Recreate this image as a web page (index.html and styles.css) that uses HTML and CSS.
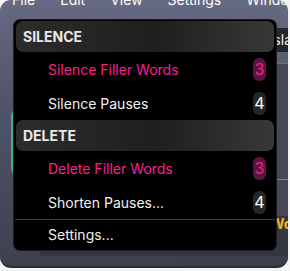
FILE: index.html
```html
<!DOCTYPE html>
<html>
<head>
    <meta charset="utf-8" />
    <link rel="stylesheet" href="styles.css">
</head>
<body>
    <div class="window">
        <nav class="menubar">
            <span>File</span>
            <span>Edit</span>
            <span>View</span>
            <span>Settings</span>
            <span>Window</span>
        </nav>

        <div class="workspace">
            <div class="left-pane">
                <div class="teal-card"></div>
            </div>
            <div class="right-pane">
                <div class="tab-strip"><span>Transcript Isla</span></div>
                <div class="ruler"></div>
                <div class="lower">
                    <div class="mark"></div>
                    <div class="caption">Wow</div>
                </div>
                <div class="foot"></div>
            </div>
        </div>

        <!-- dropdown over the app -->
        <section class="menu">
            <div class="menu-head">SILENCE</div>
            <div class="menu-item pink">
                <span>Silence Filler Words</span>
                <span class="badge">3</span>
            </div>
            <div class="menu-item">
                <span>Silence Pauses</span>
                <span class="badge">4</span>
            </div>

            <div class="menu-head">DELETE</div>
            <div class="menu-item pink">
                <span>Delete Filler Words</span>
                <span class="badge">3</span>
            </div>
            <div class="menu-item">
                <span>Shorten Pauses...</span>
                <span class="badge">4</span>
            </div>

            <div class="sep"></div>

            <div class="menu-item last">
                <span>Settings...</span>
            </div>
        </section>
    </div>
</body>
</html>
```

FILE: styles.css
```css
* {
    padding: 0;
    margin: 0;
    box-sizing: border-box;
}

body {
    width: 290px;
    height: 271px;
    background-color: #f4f4f6;
    overflow: hidden;
    font-family: Inter, 'Noto Sans', sans-serif;
    font-size: 14px;
    color: #f2f2f2;
}

.window {
    position: relative;
    display: flex;
    flex-direction: column;
    width: 288px;
    height: 268px;
    border-radius: 11px;
    background: linear-gradient(#666a82, #50546a 40%, #3d404d);
    border-bottom: 2px solid #2a2c35;
    overflow: hidden;
}

.menubar {
    display: flex;
    gap: 25px;
    height: 6px;
    padding-left: 12px;
    line-height: 0;
    color: #fff;
    white-space: nowrap;
}

.workspace {
    flex: 1;
    display: flex;
    padding-top: 22px;
}

.left-pane {
    width: 40px;
    padding-top: 77px;
}

.teal-card {
    height: 74px;
    margin-left: 11px;
    border-left: 2px solid #3fae94;
    border-radius: 12px 0 0 12px;
}

.right-pane {
    flex: 1;
    display: flex;
    flex-direction: column;
    align-items: stretch;
}

.tab-strip {
    height: 24px;
    background-color: #24252d;
    text-align: right;
    line-height: 24px;
    white-space: nowrap;
    overflow: hidden;
    margin-right: -4px;
}

.ruler {
    height: 12px;
    background-color: #5b5f72;
    border-bottom: 1px solid #6c7084;
}

.lower {
    flex: 1;
    display: flex;
    flex-direction: column;
    justify-content: flex-end;
    background-color: #454857;
}

.mark {
    height: 1px;
    margin-bottom: 36px;
    background-color: #7c8092;
}

.caption {
    height: 40px;
    background-color: #33353f;
    color: #f1b52a;
    font-weight: 700;
    text-align: right;
    line-height: 12px;
    padding-top: 2px;
    margin-right: -16px;
}

.foot {
    height: 10px;
    margin-left: 135px;
    background-color: #3b3e4b;
    border-radius: 0 0 0 10px;
}

.menu {
    position: absolute;
    left: 13px;
    top: 19px;
    width: 264px;
    padding: 1px 2px 2px;
    background-color: #000;
    border: 1px solid #1c1c1e;
    border-radius: 7px;
}

.menu-head {
    height: 31px;
    padding-left: 7px;
    line-height: 31px;
    font-weight: 700;
    color: #e8e8e8;
    border-radius: 7px;
    background: linear-gradient(90deg, #2c2c2c, #1f1f1f 55%, #383838);
}

.menu-item {
    display: flex;
    justify-content: space-between;
    align-items: center;
    height: 34px;
    padding: 0 8px 0 32px;
    color: #f0f0f0;
}

.menu-item.pink {
    color: #fa1f92;
}

.menu-item.last {
    height: 28px;
}

.badge {
    width: 13px;
    height: 23px;
    line-height: 23px;
    text-align: center;
    font-size: 16px;
    border-radius: 6px;
    background-color: #262626;
    color: #fff;
}

.pink .badge {
    background-color: #5a1440;
    color: #fa1f92;
}

.sep {
    height: 1px;
    margin: 0 -1px;
    background-color: #3c3c3c;
}
```
